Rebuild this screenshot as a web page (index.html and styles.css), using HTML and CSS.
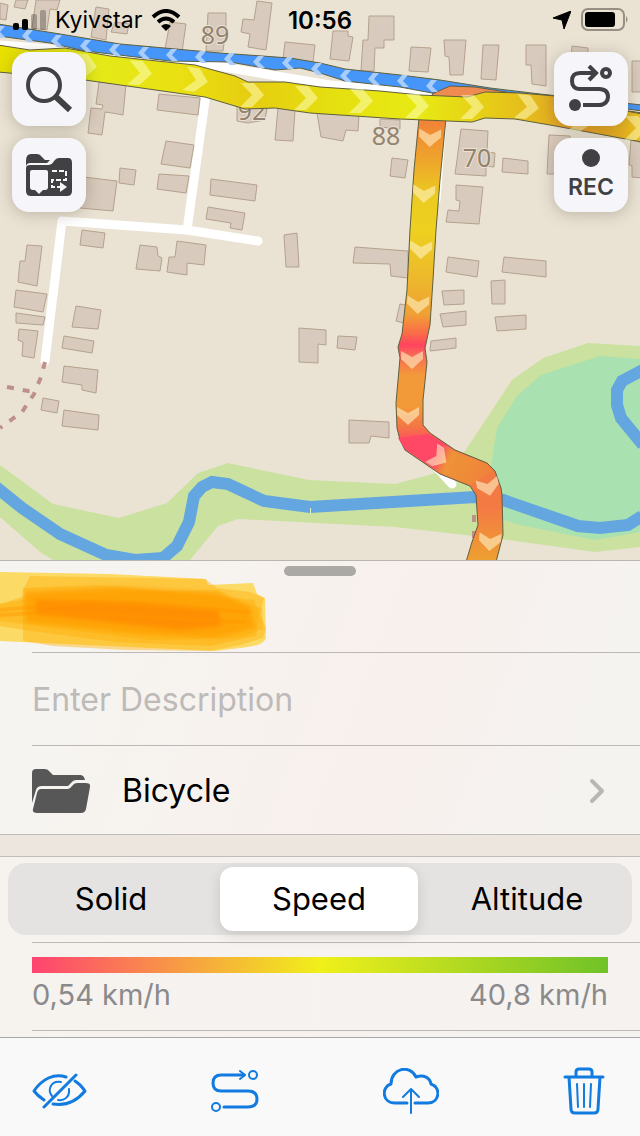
FILE: index.html
```html
<!DOCTYPE html>
<html lang="en">
  <head>
    <meta charset="utf-8">
    <meta name="viewport" content="width=device-width, initial-scale=1">
    <title>Track</title>
    <link rel="stylesheet" href="styles.css">
  </head>
  <body>
    <section class="map">
      <svg class="map-canvas" viewBox="0 0 640 560" preserveAspectRatio="xMidYMid slice" aria-hidden="true">
        <defs>
          <linearGradient id="ride" gradientUnits="userSpaceOnUse" x1="0" y1="0" x2="640" y2="0">
            <stop offset="0" stop-color="#e8e000"/>
            <stop offset=".15" stop-color="#e4ea18"/>
            <stop offset=".28" stop-color="#eae012"/>
            <stop offset=".39" stop-color="#e6cd10"/>
            <stop offset=".52" stop-color="#e5df10"/>
            <stop offset=".65" stop-color="#e8ea14"/>
            <stop offset=".76" stop-color="#e6ce16"/>
            <stop offset=".85" stop-color="#e5b420"/>
            <stop offset=".9" stop-color="#e69a28"/>
            <stop offset="1" stop-color="#e8bd1c"/>
          </linearGradient>
          <linearGradient id="turn" gradientUnits="userSpaceOnUse" x1="0" y1="121" x2="0" y2="560">
            <stop offset="0" stop-color="#f28238"/>
            <stop offset=".09" stop-color="#efa52c"/>
            <stop offset=".17" stop-color="#ebcb20"/>
            <stop offset=".25" stop-color="#edd020"/>
            <stop offset=".36" stop-color="#edb82c"/>
            <stop offset=".44" stop-color="#f0a034"/>
            <stop offset=".485" stop-color="#fa6a48"/>
            <stop offset=".51" stop-color="#ff4360"/>
            <stop offset=".53" stop-color="#fa6555"/>
            <stop offset=".58" stop-color="#f29a3a"/>
            <stop offset=".65" stop-color="#f29a38"/>
            <stop offset=".7" stop-color="#f47248"/>
            <stop offset=".735" stop-color="#ff4864"/>
            <stop offset=".78" stop-color="#f17a40"/>
            <stop offset=".88" stop-color="#f47a44"/>
            <stop offset="1" stop-color="#eda030"/>
          </linearGradient>
          <linearGradient id="bend" gradientUnits="userSpaceOnUse" x1="400" y1="440" x2="495" y2="485">
            <stop offset="0" stop-color="#ff4864"/>
            <stop offset=".38" stop-color="#ff4866"/>
            <stop offset=".5" stop-color="#ee9238"/>
            <stop offset=".75" stop-color="#ef8a38"/>
            <stop offset="1" stop-color="#f17a40"/>
          </linearGradient>
          <filter id="soft" x="-10%" y="-50%" width="120%" height="200%">
            <feGaussianBlur stdDeviation="2"/>
          </filter>
          <path id="arrow" d="M-11 -12H2L12 0L0 12H-12L0 0Z"/>
          <path id="wide-arrow" d="M-8 -11L0 -11L10 0L0 11L-8 11L-2 0Z"/>
          <path id="small-arrow" d="M-1 -6H5L0 0L6 6H0L-6 0Z"/>
        </defs>

        <rect width="640" height="560" fill="#eae3d4"/>

        <!-- meadows, wood and river -->
        <path fill="#cae1a0" d="M0 465L53 504L119 518L167 503L198 473L228 463L309 480L395 484L433 474L465 451L512 380L543 358L588 343L640 346V547L595 552L500 539L395 527L238 519L218 526L190 560H53L40 552L0 517Z"/>
        <path fill="#aae1b0" d="M600 356L541 375L517 396L497 428L491 465L489 515L520 525L595 540L640 532V359Z"/>
        <g fill="none" stroke="#64a6df" stroke-width="12">
          <path d="M-4 487L22 508L60 534L106 555L135 560L163 558L177 546L189 522L194 496L202 487L212 482L228 484L264 501L310 507L475 497L503 500L578 526L600 528L628 525L642 516"/>
          <path d="M643 370L622 381L617 390V405L621 418L643 445"/>
        </g>
        <path d="M310.500 508V514" stroke="#e0edc4" stroke-width="1"/>

        <!-- streets -->
        <g fill="none" stroke="#fff" stroke-width="9" stroke-linecap="round" stroke-linejoin="round">
          <path d="M45 361L62 221L187 230L258 241"/>
          <path d="M187 230L206 94"/>
          <path d="M0 45L170 58L330 85L470 98"/>
          <path d="M442 120L436 200M430 460L452 484M479 535L476 545"/>
        </g>
        <g fill="none" stroke="#bd908a" stroke-width="4" stroke-dasharray="7 9">
          <path d="M45 362L41 377L34 394L22 412L0 428"/>
          <path d="M7 387L28 391L35 390"/>
          <path d="M474 515V550"/>
        </g>

        <!-- buildings -->
        <g fill="#d8cabc" stroke="#b5a18e" stroke-width="1">
          <path d="M0 3L8 5L6 20L0 19Z"/>
          <path d="M16 0H28L25 9L14 7Z"/>
          <path d="M36 0H60L57 10L50 9L47 30L32 28Z"/>
          <path d="M96 7L109 9L106 40L91 37Z"/>
          <path d="M115 22L129 24L127 34L111 32Z"/>
          <path d="M170 22L186 24L182 52L165 49Z"/>
          <path d="M208 13H226V29L223 51H206Z"/>
          <path d="M257 1L272 3L266 50L248 47L250 34L241 32L243 19L254 20Z"/>
          <path d="M285 42L315 45L313 62L283 59Z"/>
          <path d="M333 31H348V36L353 37L349 61L330 59Z"/>
          <path d="M369 16H394V40H384V48H375L374 71H361L363 40H368Z"/>
          <path d="M411 47L431 48L428 72L409 71Z"/>
          <path d="M444 40H466L463 75H450L449 57L445 56Z"/>
          <path d="M483 45H499L496 80L481 79Z"/>
          <path d="M526 45H546V86L532 84L531 65H526Z"/>
          <path d="M572 46L588 48V62H571Z"/>
          <path d="M632 61H642V92H632Z"/>
          <path d="M99 82L126 84L123 115L112 113L105 112L102 135L88 133L91 108L102 109L103 105L96 104Z"/>
          <path d="M159 94L200 98L198 115L157 110Z"/>
          <path d="M166 141L194 145L190 168L161 164Z"/>
          <path d="M159 174L189 176L186 193L157 189Z"/>
          <path d="M120 168L136 170L134 185L119 183Z"/>
          <path d="M83 177L117 181L113 211L80 208Z"/>
          <path d="M211 179L257 185L255 201L210 195Z"/>
          <path d="M208 207L245 213L242 230L230 228L231 223L206 219Z"/>
          <path d="M237 107L267 109L265 120L248 123L237 121Z"/>
          <path d="M278 108L295 110L293 141L275 140Z"/>
          <path d="M317 113L359 115L358 131L346 130L343 141L321 137Z"/>
          <path d="M380 119L400 120V129L380 127Z"/>
          <path d="M392 158L408 160L405 178L390 176Z"/>
          <path d="M461 129L488 131L487 152L495 153L494 167L486 166V176L455 174L457 160Z"/>
          <path d="M503 158L528 161V174L502 172Z"/>
          <path d="M549 135L570 136V174H547Z"/>
          <path d="M631 140L642 143V178L632 177V166L629 165Z"/>
          <path d="M456 185L483 187L479 224L446 222L448 210L459 211L460 201L456 200Z"/>
          <path d="M82 230L105 233L103 248L80 245Z"/>
          <path d="M27 245L42 246L37 286L18 282L20 261H25Z"/>
          <path d="M16 290L47 294L43 312L14 307Z"/>
          <path d="M16 313L45 317L43 325L16 323Z"/>
          <path d="M19 329L38 331L34 358L22 356L23 342L18 340Z"/>
          <path d="M76 306L101 310L98 329L72 327Z"/>
          <path d="M64 336L94 341L92 353L62 348Z"/>
          <path d="M64 366L98 370L96 393L82 390V385L62 382Z"/>
          <path d="M43 398L59 401L57 413L41 410Z"/>
          <path d="M64 410L99 415L98 430L62 426Z"/>
          <path d="M140 245L157 247L158 256L162 258L160 271L136 269Z"/>
          <path d="M177 241L206 245L204 265L187 263V275L167 272L169 257H175Z"/>
          <path d="M284 235L297 233L299 267H286Z"/>
          <path d="M299 328L326 330V345L318 344V363L299 362Z"/>
          <path d="M338 336L357 337L355 350L337 348Z"/>
          <path d="M355 247L408 251V278L391 276L390 264L353 263Z"/>
          <path d="M400 304L406 305L404 323L396 321Z"/>
          <path d="M448 257L479 261L477 277L446 272Z"/>
          <path d="M504 257L546 261V277L502 272Z"/>
          <path d="M442 291L464 290V304L444 305Z"/>
          <path d="M440 314L466 311V325L443 327Z"/>
          <path d="M491 281L505 280V304H492Z"/>
          <path d="M495 317L526 315V329L497 331Z"/>
          <path d="M431 341L456 338V348L430 351Z"/>
          <path d="M349 420L389 422V438L371 436L369 443H349Z"/>
        </g>

        <!-- house numbers -->
        <g class="house-number">
          <text x="215" y="44">89</text>
          <text x="252" y="120">92</text>
          <text x="386" y="145">88</text>
          <text x="477" y="167">70</text>
        </g>

        <!-- recorded tracks -->
        <g stroke="#5f5f3d" stroke-width="1" stroke-linejoin="round">
          <path fill="#4695f8" d="M-2 24L60 34L120 44L220 53L290 58L320 63L345 69L400 75L440 80L490 88L540 94L642 105V111L540 97L432 93L400 87L345 81L320 73L300 68L275 70L230 62L170 61L85 51L50 43L-2 36Z"/>
          <path fill="#ef8a50" d="M432 94L450 86L475 87L500 91L555 100L642 113V125H560L440 105Z"/>
          <path fill="url(#turn)" d="M419 118L414 170L410 230L407 290L402 334L398 347L400 358L396 403L397 428L400 440L405 450L440 474L470 486L476 495L478 525L472 542L466 562H496L503 535L502 495L501 488L495 471L487 463L455 450L430 433L423 425V400L427 362L425 348L430 325L433 280L436 230L440 180L446 118Z"/>
          <path fill="url(#ride)" d="M-2 45L30 50L65 48L110 56L195 65L235 76L248 82L285 82L320 87L380 91L420 95L467 97L485 92L520 93L555 96L600 106L642 114V142L550 125L515 119L485 118L472 122L400 119L310 113L275 108L245 109L205 97L85 80L-2 72Z"/>
        </g>
        <path fill="url(#bend)" d="M398 438L428 434L455 451L487 464L493 472L470 485L440 473L405 449Z"/>

        <g fill="#a9cdfa">
          <use href="#small-arrow" transform="translate(0 32)"/>
          <use href="#small-arrow" transform="translate(28 36)"/>
          <use href="#small-arrow" transform="translate(57 41)"/>
          <use href="#small-arrow" transform="translate(86 46)"/>
          <use href="#small-arrow" transform="translate(115 50)"/>
          <use href="#small-arrow" transform="translate(144 53)"/>
          <use href="#small-arrow" transform="translate(172 55)"/>
          <use href="#small-arrow" transform="translate(201 57)"/>
          <use href="#small-arrow" transform="translate(230 59)"/>
          <use href="#small-arrow" transform="translate(259 62)"/>
          <use href="#small-arrow" transform="translate(288 63)"/>
          <use href="#small-arrow" transform="translate(317 69)"/>
          <use href="#small-arrow" transform="translate(346 76)"/>
          <use href="#small-arrow" transform="translate(374 79)"/>
          <use href="#small-arrow" transform="translate(403 81)"/>
          <use href="#small-arrow" transform="translate(432 86)"/>
        </g>
        <g fill="#ffffc8" fill-opacity=".5">
          <use href="#arrow" transform="translate(85 66) rotate(4)"/>
          <use href="#arrow" transform="translate(140 73) rotate(3)"/>
          <use href="#arrow" transform="translate(196 80) rotate(9)"/>
          <use href="#arrow" transform="translate(252 95)"/>
          <use href="#arrow" transform="translate(306 98)"/>
          <use href="#arrow" transform="translate(361 101)"/>
          <use href="#arrow" transform="translate(417 106)"/>
          <use href="#arrow" transform="translate(472 107)"/>
          <use href="#arrow" transform="translate(527 107) rotate(6)"/>
          <use href="#arrow" transform="translate(582 120) rotate(10)"/>
          <use href="#arrow" transform="translate(636 128)"/>
        </g>
        <g fill="#fff5ca" fill-opacity=".58">
          <use href="#wide-arrow" transform="translate(430 137) rotate(92)"/>
          <use href="#wide-arrow" transform="translate(424 193) rotate(92)"/>
          <use href="#wide-arrow" transform="translate(421 249) rotate(92)"/>
          <use href="#wide-arrow" transform="translate(418 304) rotate(93)"/>
          <use href="#wide-arrow" transform="translate(412 359) rotate(90)"/>
          <use href="#wide-arrow" transform="translate(408 415) rotate(90)"/>
          <use href="#wide-arrow" transform="translate(438 457) rotate(33)"/>
          <use href="#wide-arrow" transform="translate(488 486) rotate(78)"/>
          <use href="#wide-arrow" transform="translate(490 541) rotate(94)"/>
        </g>
      </svg>

      <header class="status-bar">
        <div class="carrier">
          <svg width="34" height="20" viewBox="0 0 34 20" aria-hidden="true">
            <rect x="1" y="13" width="6" height="7" rx="2"/>
            <rect x="10" y="9" width="6" height="11" rx="2"/>
            <g opacity=".25">
              <rect x="19" y="4" width="6" height="16" rx="2"/>
              <rect x="28" y="0" width="6" height="20" rx="2"/>
            </g>
          </svg>
          <span>Kyivstar</span>
          <svg width="30" height="22" viewBox="0 0 30 22" aria-hidden="true">
            <g fill="none" stroke="#000" stroke-width="4">
              <path d="M2 8Q15 -4 28 8"/>
              <path d="M7 13Q15 6 23 13"/>
            </g>
            <path d="M10 17Q15 13 20 17L15 22Z"/>
          </svg>
        </div>
        <time class="clock">10:56</time>
        <div class="power">
          <svg width="18" height="18" viewBox="0 0 18 18" aria-hidden="true">
            <path d="M18 0L11 18L9 9L0 7Z" stroke="#000" stroke-width="1" stroke-linejoin="round"/>
          </svg>
          <svg width="48" height="24" viewBox="0 0 48 24" aria-hidden="true">
            <rect x="2" y="1" width="42" height="21" rx="6" fill="none" stroke="#969083" stroke-width="2"/>
            <rect x="5" y="4" width="30" height="15" rx="3"/>
            <path d="M46 8Q49 11 46 15Z" fill="#969083"/>
          </svg>
        </div>
      </header>

      <div class="map-controls">
        <div class="control-column">
          <button class="map-button" type="button" aria-label="Search">
            <svg width="48" height="48" viewBox="0 0 48 48" fill="none" stroke="#414144">
              <circle cx="19" cy="20" r="16" stroke-width="4"/>
              <path d="M30 31L45 45" stroke-width="6"/>
            </svg>
          </button>
          <button class="map-button" type="button" aria-label="My places">
            <svg width="48" height="44" viewBox="0 0 48 44">
              <path fill="#414144" d="M1 8Q1 1 6 1H12Q15 1 17 4L20 7H25L22 10H5Q2 10 1 13Z"/>
              <path fill="#414144" d="M5 12H23Q27 12 29 8Q31 5 34 5H43Q47 5 47 10V38Q47 43 42 43H6Q1 43 1 38V15Q1 12 5 12Z"/>
              <path fill="#f6f6fa" d="M7 17H21Q23 17 23 19V34Q23 37 20 37H18L14 41L10 37H8Q5 37 5 34V19Q5 17 7 17Z"/>
              <path fill="none" stroke="#f6f6fa" stroke-width="2" stroke-dasharray="5 2" d="M27 18H41V27H27V34H35"/>
              <path fill="#f6f6fa" d="M35 29L42 34L35 39Z"/>
            </svg>
          </button>
        </div>
        <div class="control-column">
          <button class="map-button" type="button" aria-label="Tracks">
            <svg width="46" height="48" viewBox="0 0 46 48" fill="none" stroke="#414144" stroke-width="4">
              <path d="M27 8H12C5 8 4 12 4 16S6 24 12 24H31C38 24 40 28 40 32S37 40 31 40H15"/>
              <path d="M21 1L28 8L21 15"/>
              <circle cx="38" cy="8" r="4"/>
              <circle cx="7" cy="40" r="6" fill="#414144" stroke="none"/>
            </svg>
          </button>
          <button class="map-button record" type="button">
            <span class="record-dot"></span>
            <span>REC</span>
          </button>
        </div>
      </div>
    </section>

    <main class="panel">
      <div class="name-row">
        <span class="grabber"></span>
        <input class="name-input" type="text" aria-label="Track name">
        <svg class="marker" width="268" height="84" viewBox="0 0 268 84" aria-hidden="true">
          <path fill="#fcda66" d="M0 4L110 6L206 11L208 17L253 15L257 26L265 30L266 70Q264 78 240 80L215 83L0 73Z"/>
          <g fill="#ffae08" fill-opacity=".42">
            <path d="M30 8L205 11L217 20L250 24L264 30L260 46L266 60L263 70L240 77L210 83L125 82L53 78L23 73L23 22Z"/>
            <path d="M23 20L100 17L254 32L259 45L256 68L210 78L115 74L25 62L0 58V36L25 28Z"/>
            <path d="M0 36L60 25L218 22L240 35L262 40L263 61L240 70L150 72L40 58L0 53Z"/>
          </g>
          <path fill="#ff9d00" fill-opacity=".75" filter="url(#soft)" d="M24 24L120 19L218 25L250 38L255 60L215 70L140 66L26 54Z"/>
          <path fill="#ff8800" fill-opacity=".75" filter="url(#soft)" d="M36 32L130 34L218 42L222 58L180 62L110 54L36 46Z"/>
          <path fill="none" stroke="#ff9500" stroke-width="4" opacity=".4" d="M0 47L50 44L245 54M0 42L90 34L250 44"/>
        </svg>
      </div>
      <div class="description-row">
        <input class="description-input" type="text" placeholder="Enter Description" aria-label="Description">
      </div>
      <button class="folder-row" type="button">
        <svg width="58" height="44" viewBox="0 0 58 44" fill="#575757" aria-hidden="true">
          <path d="M0 4Q0 0 4 0H13Q16 0 18 3L21 6H48Q52 6 53 11H44Q41 11 39 14L36 17H10Q5 17 4 21L0 34Z"/>
          <path d="M9 20H36Q38 20 40 17Q42 14 45 14H54Q59 14 58 18L54 40Q53 44 49 44H5Q0 44 1 40L5 24Q6 20 9 20Z"/>
        </svg>
        <span class="folder-name">Bicycle</span>
        <svg width="16" height="26" viewBox="0 0 16 26" aria-hidden="true">
          <path d="M3 3L13 13L3 23" fill="none" stroke="#b9b6b4" stroke-width="4" stroke-linecap="round" stroke-linejoin="round"/>
        </svg>
      </button>

      <div class="coloring">
        <div class="segments">
          <label class="segment"><input type="radio" name="coloring"><span>Solid</span></label>
          <label class="segment"><input type="radio" name="coloring" checked><span>Speed</span></label>
          <label class="segment"><input type="radio" name="coloring"><span>Altitude</span></label>
        </div>
        <div class="legend">
          <div class="legend-bar"></div>
          <div class="legend-labels">
            <span>0,54 km/h</span>
            <span>40,8 km/h</span>
          </div>
        </div>
      </div>
    </main>

    <nav class="toolbar">
      <button type="button" aria-label="Hide track">
        <svg width="55" height="36" viewBox="0 0 55 36">
          <path d="M34 4C22 0 10 6 2 18C5 22 9 25 12 27" stroke-width="3"/>
          <path d="M43 8C48 11 51 15 53 18C44 29 34 33 21 31" stroke-width="3"/>
          <path d="M29 9C19 7 15 17 20 23M37 16C38 24 32 28 26 27" stroke-width="2"/>
          <path d="M12 34L44 2" stroke-width="3"/>
        </svg>
      </button>
      <button type="button" aria-label="Appearance">
        <svg width="48" height="42" viewBox="0 0 48 42">
          <path d="M33 5H10Q2 5 2 13T10 21H37Q46 21 46 29T37 37H13" stroke-width="3"/>
          <path d="M29 1L34 5L29 9" stroke-width="2"/>
          <circle cx="42" cy="5" r="4" stroke-width="2"/>
          <circle cx="5" cy="37" r="4" stroke-width="2"/>
        </svg>
      </button>
      <button type="button" aria-label="Share">
        <svg width="56" height="46" viewBox="0 0 56 46">
          <path d="M24 35H12C-1 35 -2 19 8 16C8 0 27 -4 33 9C41 6 47 10 48 16C59 20 56 35 45 35H32" stroke-width="3"/>
          <path d="M28 45V21M20 29L28 21L36 29" stroke-width="2"/>
        </svg>
      </button>
      <button type="button" aria-label="Delete">
        <svg width="42" height="48" viewBox="0 0 42 48">
          <path d="M2 10H40M13 10V5Q13 2 16 2H26Q29 2 29 5V10M6 10L8 42Q8 46 12 46H31Q35 46 35 42L37 10" stroke-width="3"/>
          <path d="M14 17L15 40M21 17V40M28 17L27 40" stroke-width="2"/>
        </svg>
      </button>
    </nav>
  </body>
</html>
```
FILE: styles.css
```css
* {
  box-sizing: border-box;
}

body {
  display: flex;
  flex-direction: column;
  min-height: 100vh;
  margin: 0;
  background-color: #f4f3f1;
  color: #000;
  font-family: Inter, "Liberation Sans", sans-serif;
}

button {
  padding: 0;
  border: none;
  background: none;
  color: inherit;
  font-family: inherit;
  cursor: pointer;
}

svg {
  display: block;
}

/* Map */
.map {
  position: relative;
  flex: 1;
  min-height: 240px;
  overflow: hidden;
}

.map-canvas {
  position: absolute;
  inset: 0;
  width: 100%;
  height: 100%;
}

.house-number text {
  fill: #93826f;
  stroke: #eae3d4;
  stroke-width: 2px;
  paint-order: stroke;
  font-family: "Noto Sans", sans-serif;
  font-size: 25px;
  text-anchor: middle;
}

.status-bar {
  position: relative;
  display: grid;
  grid-template-columns: 1fr auto 1fr;
  align-items: center;
  height: 40px;
  padding: 0 12px;
  font-size: 23px;
}

.carrier,
.power {
  display: flex;
  align-items: center;
}

.carrier {
  gap: 9px;
}

.power {
  justify-content: flex-end;
  gap: 9px;
}

.clock {
  font-size: 24px;
  font-weight: 600;
}

.map-controls {
  position: relative;
  display: flex;
  justify-content: space-between;
  padding: 12px;
}

.control-column {
  display: flex;
  flex-direction: column;
  gap: 12px;
}

.map-button {
  display: flex;
  flex-direction: column;
  align-items: center;
  justify-content: center;
  width: 74px;
  height: 74px;
  border-radius: 17px;
  background-color: #f6f6fa;
  box-shadow: 0 2px 16px rgba(80, 65, 45, 0.3);
  color: #414144;
}

.record {
  gap: 6px;
  font-size: 23px;
  font-weight: 600;
  line-height: 28px;
}

.record-dot {
  width: 18px;
  height: 18px;
  border-radius: 50%;
  background-color: #414144;
}

/* Track details */
.panel {
  border-top: 1px solid #b9b5b0;
  background: linear-gradient(110deg, #f6f4f0 15%, #f8f0ed 55%, #f5f3f0 80%);
}

.name-row {
  position: relative;
  display: flex;
  flex-direction: column;
  align-items: center;
  height: 92px;
  padding: 5px 0 0 32px;
}

.grabber {
  width: 72px;
  height: 10px;
  margin-right: 32px;
  border-radius: 5px;
  background-color: #aaa9a6;
}

.name-input,
.description-input {
  width: 100%;
  flex: 1;
  padding: 0;
  border: none;
  border-bottom: 1px solid #bbb8b5;
  border-radius: 0;
  outline: none;
  background: none;
  font-family: inherit;
  font-size: 32px;
}

/* highlighter strokes lie over the name */
.marker {
  position: absolute;
  top: 7px;
  left: 0;
}

.description-row {
  display: flex;
  height: 93px;
  padding-left: 32px;
}

.description-input::placeholder {
  color: #bdbab8;
}

.folder-row {
  display: flex;
  align-items: center;
  width: 100%;
  height: 89px;
  padding: 0 35px 0 32px;
  text-align: left;
}

.folder-name {
  flex: 1;
  margin-left: 32px;
  font-size: 32px;
}

.coloring {
  border-top: 21px solid #ece6df;
  padding-top: 7px;
  background: linear-gradient(to right, #f6f3ef, #f5f2f0);
  box-shadow: inset 0 1px #c0bcb8, 0 -1px #c0bcb8;
}

.segments {
  display: grid;
  grid-template-columns: repeat(3, 1fr);
  margin: 0 8px;
  padding: 4px 0;
  border-radius: 18px;
  background-color: #e5e3e2;
}

.segment {
  cursor: pointer;
}

.segment input {
  position: absolute;
  opacity: 0;
}

.segment span {
  display: block;
  margin: 0 6px 0 4px;
  border-radius: 13px;
  font-size: 31px;
  line-height: 64px;
  text-align: center;
}

.segment input:checked + span {
  background-color: #fff;
  box-shadow: 0 4px 14px rgba(0, 0, 0, 0.13);
}

.legend {
  margin: 7px 0 6px 32px;
  padding: 14px 32px 13px 0;
  border-top: 1px solid #bbb8b5;
  border-bottom: 1px solid #bbb8b5;
}

.legend-bar {
  height: 16px;
  background: linear-gradient(to right, #ff4370, #f0f01a 50%, #70c228);
}

.legend-labels {
  display: flex;
  justify-content: space-between;
  color: #8a8a8c;
  font-size: 29px;
  line-height: 44px;
}

/* Bottom actions */
.toolbar {
  display: flex;
  align-items: center;
  justify-content: space-between;
  height: 99px;
  padding: 8px 35px 0 32px;
  border-top: 1px solid #aaa8a6;
  background-color: #faf9fa;
}

.toolbar svg {
  fill: none;
  stroke: #117be0;
  stroke-linecap: round;
  stroke-linejoin: round;
}
```
